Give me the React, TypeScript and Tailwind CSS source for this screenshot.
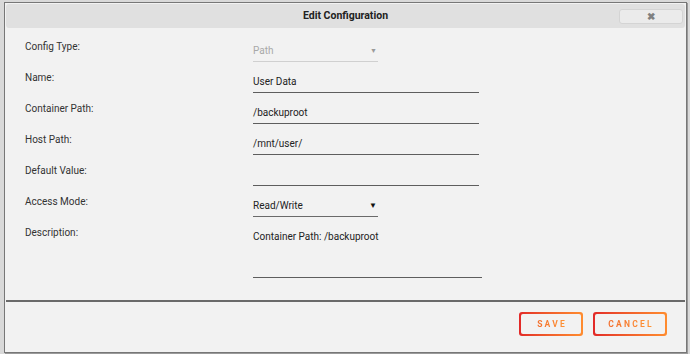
const rows = [
  { label: "Config Type:", value: "Path", kind: "select-disabled" },
  { label: "Name:", value: "User Data", kind: "text" },
  { label: "Container Path:", value: "/backuproot", kind: "text" },
  { label: "Host Path:", value: "/mnt/user/", kind: "text" },
  { label: "Default Value:", value: "", kind: "text" },
  { label: "Access Mode:", value: "Read/Write", kind: "select" },
];

function Field({ value, kind }: { value: string; kind: string }) {
  if (kind === "select-disabled") {
    return (
      <div className="mt-[4px] flex w-[125px] items-center justify-between border-b border-[#d0d0d0] pb-[3px] leading-[14px] text-[#a8a8a8]">
        <span>{value}</span>
        <span className="mr-[1px] text-[7px] text-[#9a9a9a]">▼</span>
      </div>
    );
  }
  if (kind === "select") {
    return (
      <div className="mt-[4px] flex w-[125px] items-center justify-between border-b border-[#6a6a6a] pb-[3px] leading-[14px] text-[#222]">
        <span>{value}</span>
        <span className="mr-[1px] text-[8px] text-[#111]">▼</span>
      </div>
    );
  }
  return (
    <div className="mt-[4px] h-[18px] w-[226px] border-b border-[#5e5e5e] leading-[14px] text-[#222]">
      {value}
    </div>
  );
}

function GradButton({ label, width }: { label: string; width: string }) {
  return (
    <div className={`rounded-[3px] bg-linear-to-r from-[#e22828] to-[#ff8c2f] p-[2px] ${width}`}>
      <div className="flex h-[20px] items-center justify-center rounded-[2px] bg-[#f2f2f2]">
        <span className="bg-linear-to-r from-[#f26a2a] to-[#ff9636] bg-clip-text pl-[2px] text-[8.5px] font-bold tracking-[2.2px] text-transparent">
          {label}
        </span>
      </div>
    </div>
  );
}

export default function App() {
  return (
    <div
      className="h-[354px] w-[690px] bg-[#d9d9d9] pl-[4px] pt-[2px] text-[10px]"
      style={{ fontFamily: "Roboto, 'Open Sans', sans-serif" }}
    >
      <div className="flex h-[351px] w-[683px] flex-col border border-[#777] bg-[#f2f2f2] shadow-[1px_1px_0_#9a9a9a]">
        {/* Title bar */}
        <div className="m-[1px] grid h-[24px] grid-cols-[1fr_auto_1fr] items-center rounded-[3px] bg-[#e0e0e0]">
          <div />
          <div className="text-[10.5px] font-bold text-[#222]">Edit Configuration</div>
          <div className="flex justify-end pr-[2px]">
            <div className="mt-[1px] flex h-[15px] w-[64px] items-center justify-center rounded-[3px] border border-[#d4d4d4] bg-[#ebebeb] text-[10px] font-bold text-[#808080]">
              ✖
            </div>
          </div>
        </div>

        {/* Form */}
        <div className="mt-[11px] flex flex-col pl-[20px]">
          {rows.map((r) => (
            <div key={r.label} className="grid h-[31px] grid-cols-[228px_1fr]">
              <div className="leading-[14px] text-[#333]">{r.label}</div>
              <div>
                <Field value={r.value} kind={r.kind} />
              </div>
            </div>
          ))}
          <div className="grid grid-cols-[228px_1fr]">
            <div className="leading-[14px] text-[#333]">Description:</div>
            <div className="mt-[4px] h-[48px] w-[229px] border-b border-[#5e5e5e] leading-[14px] text-[#222]">
              Container Path: /backuproot
            </div>
          </div>
        </div>

        {/* Divider */}
        <div className="mx-[1px] mt-[22px] border-t-2 border-[#6a6a6a]" />

        {/* Buttons */}
        <div className="mt-[10px] flex justify-end gap-[10px] pr-[19px]">
          <GradButton label="SAVE" width="w-[64px]" />
          <GradButton label="CANCEL" width="w-[74px]" />
        </div>
      </div>
    </div>
  );
}
